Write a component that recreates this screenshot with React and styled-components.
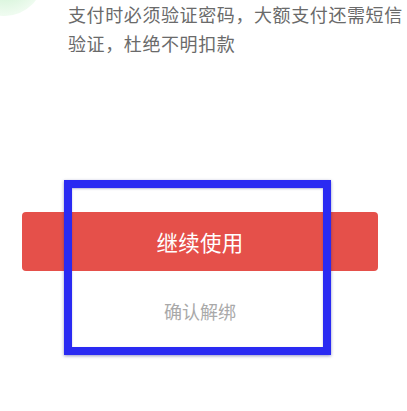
import React from 'react';
import styled, { createGlobalStyle } from 'styled-components';

const GlobalStyle = createGlobalStyle`
  html, body {
    margin: 0;
    padding: 0;
    background: #ffffff;
  }
  body {
    font-family: "Noto Sans CJK SC", "Noto Sans", sans-serif;
    overflow: hidden;
  }
`;

const Page = styled.div`
  position: relative;
  width: 407px;
  height: 411px;
  overflow: hidden;
  background: #fff;
`;

const Feature = styled.div`
  display: flex;
  align-items: flex-start;
`;

const FeatureIcon = styled.div`
  flex: none;
  width: 76px;
  height: 76px;
  margin: -60px 0 0 -33px;
  border-radius: 50%;
  background: radial-gradient(circle at 50% 45%, #b9eabf 0%, #d9f5dc 40%, #eefbef 70%, #fbfffb 100%);
`;

const FeatureText = styled.p`
  margin: 0 0 0 25px;
  font-size: 18px;
  letter-spacing: 0.6px;
  line-height: 29px;
  color: #6a6a6a;
  width: 340px;
`;

const Actions = styled.div`
  display: flex;
  flex-direction: column;
  align-items: stretch;
  padding: 154px 29px 0 22px;
`;

const PrimaryButton = styled.button`
  height: 59px;
  border: none;
  border-radius: 4px;
  background: #e5504a;
  color: #fff;
  font-family: inherit;
  font-size: 21.5px;
  letter-spacing: 0.3px;
  cursor: pointer;
`;

const LinkButton = styled.button`
  margin-top: 22px;
  height: 36px;
  border: none;
  background: none;
  color: #a9a9a9;
  font-family: inherit;
  font-size: 18px;
  cursor: pointer;
`;

const Highlight = styled.div`
  position: absolute;
  left: 64px;
  top: 180px;
  width: 267px;
  height: 175px;
  box-sizing: border-box;
  border: 8.5px solid #2a2af2;
  box-shadow: 0 1px 3px rgba(20, 20, 120, 0.45), inset 0 1px 2px rgba(20, 20, 120, 0.3);
  pointer-events: none;
`;

export default function App() {
  return (
    <Page>
      <GlobalStyle />
      <Feature>
        <FeatureIcon />
        <FeatureText>支付时必须验证密码，大额支付还需短信验证，杜绝不明扣款</FeatureText>
      </Feature>
      <Actions>
        <PrimaryButton>继续使用</PrimaryButton>
        <LinkButton>确认解绑</LinkButton>
      </Actions>
      <Highlight />
    </Page>
  );
}
